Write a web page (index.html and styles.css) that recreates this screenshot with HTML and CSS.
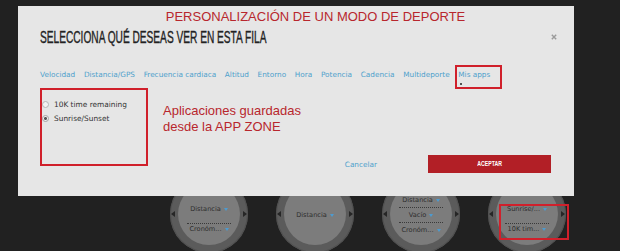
FILE: index.html
```html
<!DOCTYPE html>
<html lang="es">
<head>
<meta charset="utf-8">
<title>Personalización de un modo de deporte</title>
<link rel="stylesheet" href="styles.css">
</head>
<body>
<div class="screen">
  <div class="watches">
    <div class="watch">
      <div class="face face-2">
        <div class="row sep">Distancia<i class="caret"></i></div>
        <div class="row">Cronóm...<i class="caret"></i></div>
      </div>
      <i class="arrow arrow-l"></i><i class="arrow arrow-r"></i>
    </div>
    <div class="watch">
      <div class="face face-1">
        <div class="row">Distancia<i class="caret"></i></div>
      </div>
      <i class="arrow arrow-l"></i><i class="arrow arrow-r"></i>
    </div>
    <div class="watch">
      <div class="face face-3">
        <div class="row sep">Distancia<i class="caret"></i></div>
        <div class="row sep">Vacío<i class="caret"></i></div>
        <div class="row">Cronóm...<i class="caret"></i></div>
      </div>
      <i class="arrow arrow-l"></i><i class="arrow arrow-r"></i>
    </div>
    <div class="watch">
      <div class="face face-2">
        <div class="row sep">Sunrise/...<i class="caret"></i></div>
        <div class="row">10K tim...<i class="caret"></i></div>
      </div>
      <i class="arrow arrow-l"></i><i class="arrow arrow-r"></i>
      <span class="hl"></span>
    </div>
  </div>

  <div class="modal">
    <h1 class="title">PERSONALIZACIÓN DE UN MODO DE DEPORTE</h1>
    <div class="header">
      <h2 class="heading">SELECCIONA QUÉ DESEAS VER EN ESTA FILA</h2>
      <svg class="close" viewBox="0 0 6 6" width="6" height="6"><path d="M0.8 0.8 L5.2 5.2 M5.2 0.8 L0.8 5.2" stroke="#9a9a9a" stroke-width="1.4"/></svg>
    </div>
    <nav class="tabs">
      <span>Velocidad</span>
      <span>Distancia/GPS</span>
      <span>Frecuencia cardiaca</span>
      <span>Altitud</span>
      <span>Entorno</span>
      <span>Hora</span>
      <span>Potencia</span>
      <span>Cadencia</span>
      <span>Multideporte</span>
      <span class="tab-active">Mis apps</span>
    </nav>
    <div class="content">
      <div class="apps">
        <div class="option"><i class="radio"></i>10K time remaining</div>
        <div class="option"><i class="radio on"></i>Sunrise/Sunset</div>
      </div>
      <p class="note">Aplicaciones guardadas<br>desde la APP ZONE</p>
      <div class="actions">
        <span class="cancel">Cancelar</span>
        <div class="accept"><span>ACEPTAR</span></div>
      </div>
    </div>
  </div>
</div>
</body>
</html>
```

FILE: styles.css
```css
html, body {
  margin: 0;
  padding: 0;
}
body {
  background: #212121;
  font-family: "DejaVu Sans", sans-serif;
}
.screen {
  position: relative;
  width: 620px;
  height: 251px;
  overflow: hidden;
}

/* watches row */
.watches {
  display: flex;
  gap: 28px;
  padding: 175px 0 0 170px;
}
.watch {
  position: relative;
  flex: none;
  width: 78px;
  height: 78px;
  border-radius: 50%;
  background: #5b5b5b;
  box-shadow: inset 0 0 0 1px #505050;
  display: flex;
  justify-content: center;
  align-items: center;
}
.face {
  width: 62px;
  height: 62px;
  border-radius: 50%;
  background: #7c7c7c;
  box-sizing: border-box;
  font-size: 6.6px;
  color: #2e2e2e;
}
.face-1 { padding-top: 27px; }
.face-2 { padding-top: 21px; }
.face-3 { padding-top: 12px; }
.row {
  width: 44px;
  margin: 0 auto;
  line-height: 10px;
  text-align: center;
  white-space: nowrap;
}
.face-2 .sep { padding-bottom: 9px; }
.face-3 .row { padding-bottom: 2px; }
.face-3 .row + .row { padding-top: 2px; }
.sep { border-bottom: 1px dotted #3a3a3a; }
.caret {
  display: inline-block;
  width: 0;
  height: 0;
  border-left: 2.5px solid transparent;
  border-right: 2.5px solid transparent;
  border-top: 3px solid #4d9bd0;
  margin-left: 3px;
  vertical-align: middle;
}
.arrow {
  position: absolute;
  top: 35.5px;
  width: 0;
  height: 0;
  border-top: 3.5px solid transparent;
  border-bottom: 3.5px solid transparent;
}
.arrow-l { left: 1px; border-right: 4px solid #262626; }
.arrow-r { right: 1px; border-left: 4px solid #262626; }
.hl {
  position: absolute;
  left: 11px;
  top: 29px;
  width: 70px;
  height: 36px;
  box-sizing: border-box;
  border: 2px solid #d0202b;
}

/* modal */
.modal {
  position: absolute;
  left: 18px;
  top: 6px;
  width: 556px;
  height: 190px;
  box-sizing: border-box;
  padding: 2.5px 23px 0 22px;
  background: #e6e6e6;
}
.title {
  margin: 0;
  padding-left: 40px;
  text-align: center;
  font: normal 13px/15px "Liberation Sans", Arial, sans-serif;
  color: #b8262d;
}
.header {
  display: flex;
  align-items: center;
  justify-content: space-between;
  height: 18px;
  margin-top: 4.6px;
}
.heading {
  margin: 0;
  font: normal 16.5px/18px "Liberation Sans", Arial, sans-serif;
  color: #222;
  white-space: nowrap;
  transform: scaleX(0.615);
  transform-origin: left center;
  -webkit-text-stroke: 0.35px #222;
}
.close {
  margin-right: -6px;
  flex: none;
}
.tabs {
  display: flex;
  gap: 8.7px;
  margin-top: 24px;
  font-size: 7.3px;
  line-height: 10px;
  color: #4fa1cc;
  white-space: nowrap;
}
.tab-active { position: relative; }
.tab-active::after {
  content: "";
  position: absolute;
  left: -3px;
  right: -12px;
  top: -5px;
  bottom: -9px;
  border: 2px solid #d0202b;
}
.tab-active::before {
  content: "";
  position: absolute;
  left: 2px;
  top: 13px;
  width: 2px;
  height: 2px;
  border-radius: 50%;
  background: #222;
}
.content {
  display: flex;
  align-items: flex-start;
  margin-top: 8px;
}
.apps {
  flex: none;
  width: 108px;
  height: 78px;
  box-sizing: border-box;
  border: 2px solid #d0202b;
  padding-top: 7px;
}
.option {
  display: flex;
  align-items: center;
  gap: 5px;
  height: 14px;
  font-size: 7.4px;
  color: #333;
  white-space: nowrap;
}
.radio {
  width: 5px;
  height: 5px;
  border-radius: 50%;
  border: 0.5px solid #b5b5b5;
  background: #f2f2f2;
}
.radio.on {
  background: radial-gradient(circle, #555 0 1.2px, #eee 1.7px);
  border-color: #a5a5a5;
}
.note {
  margin: 14.7px 0 0 15px;
  font: 13px/16px "Liberation Sans", Arial, sans-serif;
  color: #b8262d;
}
.actions {
  margin-left: auto;
  align-self: flex-end;
  margin-bottom: -7px;
  display: flex;
  align-items: center;
  gap: 51px;
}
.cancel {
  font-size: 7.3px;
  color: #4fa1cc;
}
.accept {
  width: 123px;
  height: 18px;
  background: #b21f26;
  color: #fff;
  display: flex;
  align-items: center;
  justify-content: center;
}
.accept span {
  display: inline-block;
  font: bold 7px/8px "Liberation Sans", Arial, sans-serif;
  transform: scaleX(0.74);
}
```
